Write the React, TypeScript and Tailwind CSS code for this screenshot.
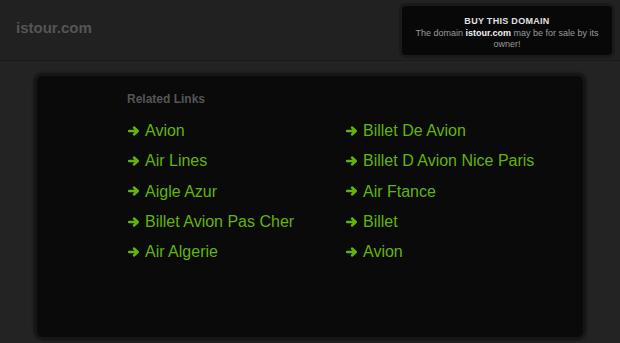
import React from 'react';

const left = ['Avion', 'Air Lines', 'Aigle Azur', 'Billet Avion Pas Cher', 'Air Algerie'];
const right = ['Billet De Avion', 'Billet D Avion Nice Paris', 'Air Ftance', 'Billet', 'Avion'];

function LinkItem({ label }: { label: string }) {
  return (
    <a href="#" className="flex items-center h-[30.3px] text-[16px] text-[#62b40a] no-underline">
      <svg width="12" height="10" viewBox="0 0 12 10" className="mr-[5px] ml-[1px] mb-[1px]">
        <path d="M1 5 H9.5 M6 1.5 L9.8 5 L6 8.5" stroke="#62b40a" strokeWidth="2.4" fill="none" strokeLinecap="round" strokeLinejoin="round" />
      </svg>
      <span>{label}</span>
    </a>
  );
}

export default function App() {
  return (
    <div className="w-[620px] h-[343px] overflow-hidden bg-[#232323] font-['Liberation_Sans',Arial,sans-serif]">
      {/* header */}
      <div className="h-[61px] bg-[#212121] border-b border-[#1b1b1b] flex items-start justify-between pl-[16px] pr-[5px]">
        <div className="mt-[17px] text-[15px] font-bold text-[#555555]">istour.com</div>
        <div className="mt-[3px] w-[216px] h-[55px] rounded-[7px] bg-[#080808] border-[3px] border-[#1a1a1a] flex flex-col items-center pt-[9px] text-center">
          <div className="text-[9px] font-bold text-[#e0e0e0] tracking-[0.3px] leading-[12px]">BUY THIS DOMAIN</div>
          <div className="flex mt-[1px] text-[9px] text-[#9a9a9a] leading-[11px] whitespace-pre">
            <span>The domain </span>
            <span className="font-bold text-[#f0f0f0]">istour.com</span>
            <span> may be for sale by its</span>
          </div>
          <div className="text-[9px] text-[#9a9a9a] leading-[11px]">owner!</div>
        </div>
      </div>

      {/* main panel */}
      <div className="pt-[12px] px-[34px]">
        <div className="h-[267px] rounded-[9px] bg-[#0a0a0a] border-[3px] border-[#161616] shadow-[0_0_3px_#111] pl-[90px] pt-[15px]">
          <div className="text-[12px] font-bold text-[#555555] leading-[16px]">Related Links</div>
          <div className="mt-[9px] grid grid-cols-[218px_1fr]">
            <div>
              {left.map((l) => (
                <LinkItem key={l} label={l} />
              ))}
            </div>
            <div>
              {right.map((l, i) => (
                <LinkItem key={l + i} label={l} />
              ))}
            </div>
          </div>
        </div>
      </div>
    </div>
  );
}
